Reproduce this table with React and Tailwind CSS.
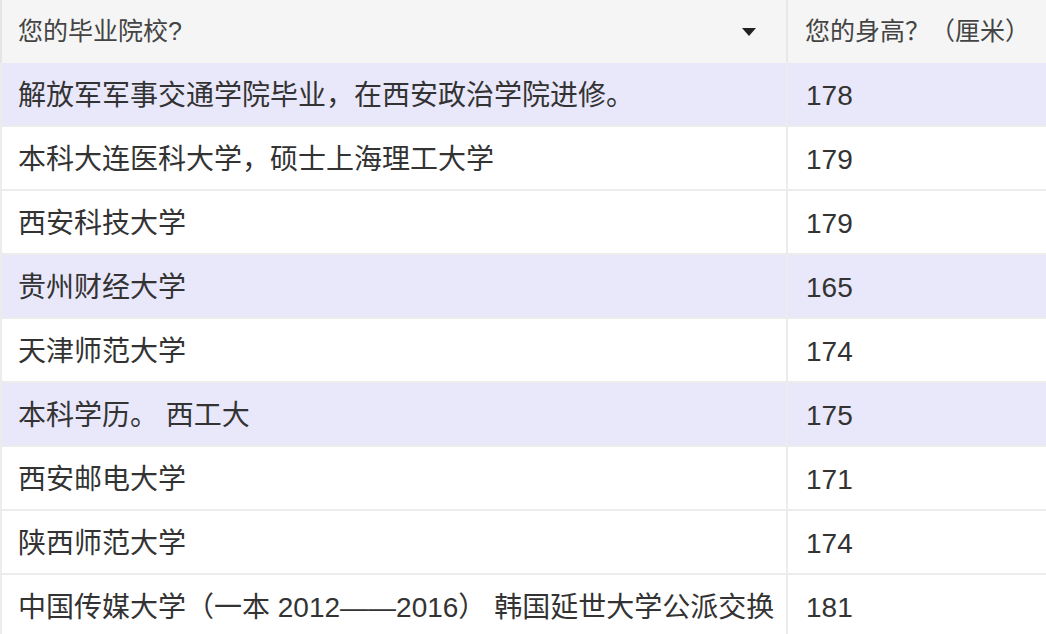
import React from 'react';

const rows = [
  { school: '解放军军事交通学院毕业，在西安政治学院进修。', height: '178', hl: true },
  { school: '本科大连医科大学，硕士上海理工大学', height: '179' },
  { school: '西安科技大学', height: '179' },
  { school: '贵州财经大学', height: '165', hl: true },
  { school: '天津师范大学', height: '174' },
  { school: '本科学历。 西工大', height: '175', hl: true },
  { school: '西安邮电大学', height: '171' },
  { school: '陕西师范大学', height: '174' },
  { school: '中国传媒大学（一本 2012——2016） 韩国延世大学公派交换', height: '181' },
];

const font = { fontFamily: '"Liberation Sans", "Noto Sans CJK SC", sans-serif' };

export default function App() {
  return (
    <div className="w-[1046px] h-[634px] overflow-hidden bg-white text-[#333]" style={font}>
      <div className="flex h-[63px] bg-[#f5f5f5] border-l-2 border-[#e6e6e6]">
        <div className="w-[786px] shrink-0 flex items-center justify-between pl-4 pr-[30px] border-r-2 border-[#e8e8e8] text-[25px] text-[#444]">
          <span>您的毕业院校?</span>
          <svg width="14" height="9" viewBox="0 0 14 9" className="mt-[2px]">
            <path d="M0 0 H14 L7 8 Z" fill="#222" />
          </svg>
        </div>
        <div className="flex-1 flex items-center pl-[17px] text-[25px] text-[#444]">
          <span>您的身高？（厘米）</span>
        </div>
      </div>
      {rows.map((r, i) => (
        <div
          key={i}
          className={`flex h-[64px] border-l-2 border-b-2 border-[#ececec] ${r.hl ? 'bg-[#e9e7fa]' : 'bg-white'}`}
        >
          <div className="w-[786px] shrink-0 flex items-center pl-4 pt-[4px] border-r-2 border-[#ececec] text-[28px] whitespace-nowrap">
            {r.school}
          </div>
          <div className="flex-1 flex items-center pl-[18px] pt-[4px] text-[28px]">{r.height}</div>
        </div>
      ))}
    </div>
  );
}
